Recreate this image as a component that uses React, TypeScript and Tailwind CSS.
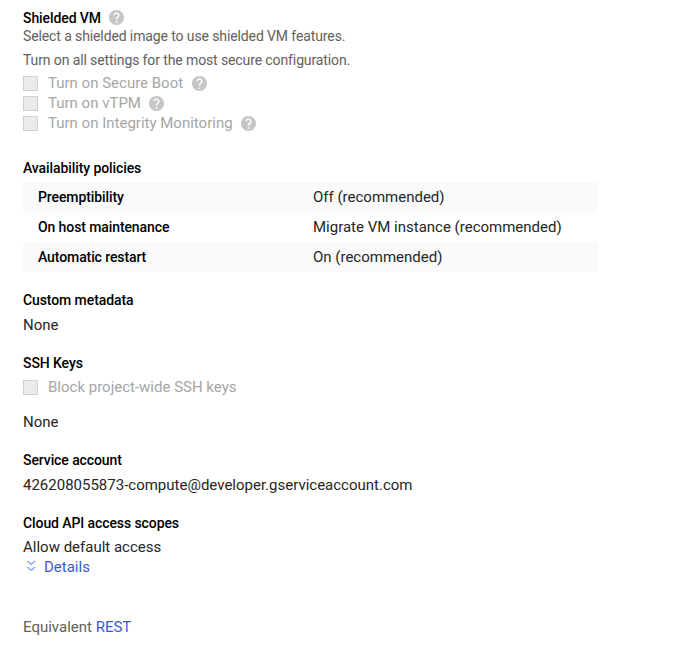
import type { ReactNode } from "react";

function Help() {
  return (
    <svg className="ml-[8.5px] mt-0.5 size-[15px] shrink-0 self-start" viewBox="2 2 20 20" fill="#c6c6c6">
      <path d="M12 2C6.480 2 2 6.480 2 12s4.480 10 10 10 10-4.480 10-10S17.520 2 12 2zm1 17h-2v-2h2v2zm2.070-7.750l-.9.920C13.450 12.900 13 13.500 13 15h-2v-.5c0-1.100.45-2.100 1.170-2.830l1.240-1.260c.37-.36.59-.86.59-1.410 0-1.100-.9-2-2-2s-2 .9-2 2H8c0-2.210 1.790-4 4-4s4 1.790 4 4c0 .88-.36 1.680-.93 2.250z" />
    </svg>
  );
}

function Check({ label, help }: { label: string; help?: boolean }) {
  return (
    <div className="flex h-5 items-start text-[15px] text-[#a6a6a6]">
      <span className="mr-2.5 mt-[3px] size-[15px] shrink-0 border border-[#d0d0d0] bg-[#ebebeb]" />
      <span>{label}</span>
      {help && <span className="mt-px flex"><Help /></span>}
    </div>
  );
}

function Title({ children }: { children: ReactNode }) {
  return <h2 className="flex h-5 items-center text-sm font-medium tracking-[-0.09px] text-black">{children}</h2>;
}

const policies = [
  ["Preemptibility", "Off (recommended)"],
  ["On host maintenance", "Migrate VM instance (recommended)"],
  ["Automatic restart", "On (recommended)"],
];

export default function App() {
  return (
    <main className="h-[667px] w-[694px] overflow-hidden bg-white pl-[23px] pt-2 font-['Roboto',sans-serif] text-[15px] leading-5 text-[#262626]">
      <section className="h-[150px]">
        <Title>Shielded VM<Help /></Title>
        <p className="-mt-0.5 text-sm leading-5 tracking-[-0.112px] text-[#616161]">Select a shielded image to use shielded VM features.</p>
        <p className="mb-[3px] mt-1 text-sm leading-5 tracking-[-0.112px] text-[#616161]">Turn on all settings for the most secure configuration.</p>
        <Check label="Turn on Secure Boot" help />
        <Check label="Turn on vTPM" help />
        <Check label="Turn on Integrity Monitoring" help />
      </section>
      <section className="h-[132px]">
        <Title>Availability policies</Title>
        <div className="mt-1 w-[575px]">
          {policies.map(([name, value]) => (
            <div key={name} className="flex h-[30px] items-center pl-[15px] odd:bg-[#fafafa]">
              <span className="w-[275px] text-sm font-medium tracking-[-0.1px] text-black">{name}</span>
              <span>{value}</span>
            </div>
          ))}
        </div>
      </section>
      <section className="h-[63px]">
        <Title>Custom metadata</Title>
        <p className="mt-[5px]">None</p>
      </section>
      <section className="h-[97px]">
        <Title>SSH Keys</Title>
        <div className="mt-1"><Check label="Block project-wide SSH keys" /></div>
        <p className="mt-[15px]">None</p>
      </section>
      <section className="h-[63px]">
        <Title>Service account</Title>
        <p className="mt-[5px]">426208055873-compute@developer.gserviceaccount.com</p>
      </section>
      <section className="h-[104px]">
        <Title>Cloud API access scopes</Title>
        <p className="mt-1">Allow default access</p>
        <a className="flex items-center text-[#3b5bd0]">
          <svg className="mr-[5px] size-4" viewBox="0 0 16 16" fill="none" stroke="#86a9ee" strokeWidth="1.400">
            <path d="M4.300 2l3.900 3.400 3.900-3.400M4.300 8l3.900 3.400 3.900-3.400" />
          </svg>
          Details
        </a>
      </section>
      <p className="text-[#616161]">Equivalent <a className="text-[#3b5bd0]">REST</a></p>
    </main>
  );
}
